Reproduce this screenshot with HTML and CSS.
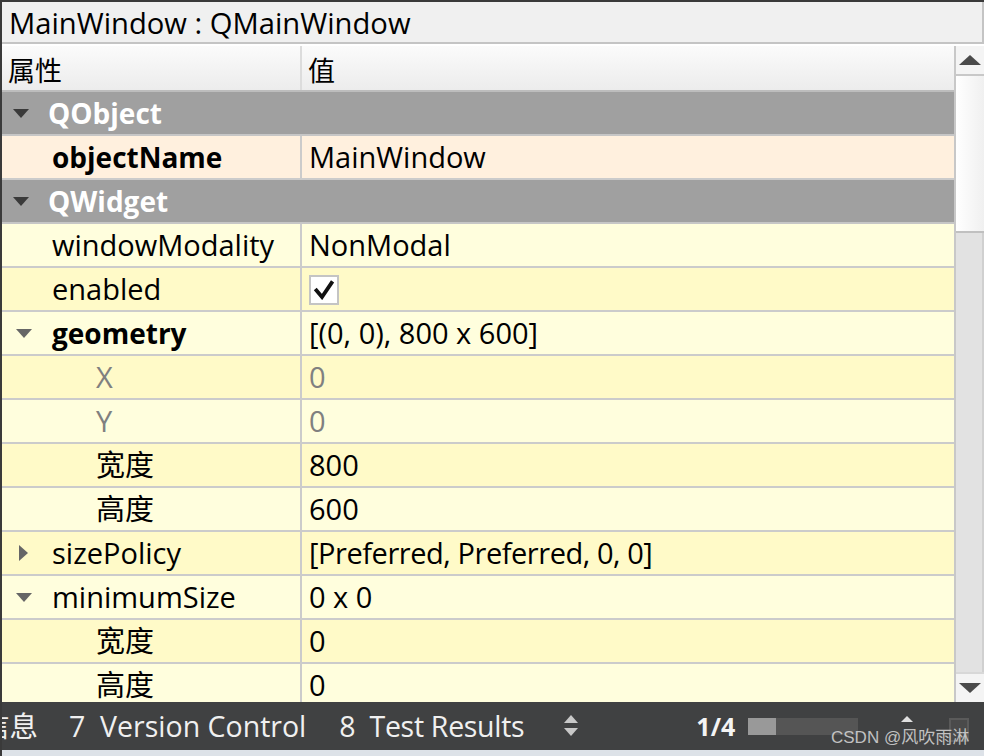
FILE: index.html
```html
<!DOCTYPE html>
<html>
<head>
<meta charset="utf-8">
<link rel="stylesheet" href="styles.css">
</head>
<body>
<div class="app">
  <div class="title">MainWindow : QMainWindow</div>
  <div class="body">
    <div class="table">
      <div class="row header">
        <div class="c1"><span class="hlabel">属性</span></div>
        <div class="c2">值</div>
      </div>
      <div class="row group">
        <div class="c1 full"><svg class="arrow" width="16" height="9" viewBox="0 0 16 9"><polygon points="0,0 16,0 8,9" fill="#3a3a3a"/></svg><span class="gname">QObject</span></div>
      </div>
      <div class="row peach">
        <div class="c1 d0"><span class="name bold">objectName</span></div>
        <div class="c2">MainWindow</div>
      </div>
      <div class="row group">
        <div class="c1 full"><svg class="arrow" width="16" height="9" viewBox="0 0 16 9"><polygon points="0,0 16,0 8,9" fill="#3a3a3a"/></svg><span class="gname">QWidget</span></div>
      </div>
      <div class="row light">
        <div class="c1 d0"><span class="name">windowModality</span></div>
        <div class="c2">NonModal</div>
      </div>
      <div class="row dark">
        <div class="c1 d0"><span class="name">enabled</span></div>
        <div class="c2"><span class="check"><svg width="22" height="20" viewBox="0 0 22 20"><path d="M3.5 10.5 L9 17 L18.5 3" fill="none" stroke="#111" stroke-width="3.8" stroke-linejoin="miter" stroke-linecap="square"/></svg></span></div>
      </div>
      <div class="row light">
        <div class="c1 tw"><svg class="arrow2" width="16" height="9" viewBox="0 0 16 9"><polygon points="0,0 16,0 8,9" fill="#666"/></svg><span class="name bold">geometry</span></div>
        <div class="c2">[(0, 0), 800 x 600]</div>
      </div>
      <div class="row dark">
        <div class="c1 d1"><span class="name gray">X</span></div>
        <div class="c2 gray">0</div>
      </div>
      <div class="row light">
        <div class="c1 d1"><span class="name gray">Y</span></div>
        <div class="c2 gray">0</div>
      </div>
      <div class="row dark">
        <div class="c1 d1"><span class="name">宽度</span></div>
        <div class="c2">800</div>
      </div>
      <div class="row light">
        <div class="c1 d1"><span class="name">高度</span></div>
        <div class="c2">600</div>
      </div>
      <div class="row dark">
        <div class="c1 tw"><svg class="arrow3" width="9" height="16" viewBox="0 0 9 16"><polygon points="0,0 9,8 0,16" fill="#666"/></svg><span class="name">sizePolicy</span></div>
        <div class="c2 narrow">[Preferred, Preferred, 0, 0]</div>
      </div>
      <div class="row light">
        <div class="c1 tw"><svg class="arrow2" width="16" height="9" viewBox="0 0 16 9"><polygon points="0,0 16,0 8,9" fill="#666"/></svg><span class="name">minimumSize</span></div>
        <div class="c2">0 x 0</div>
      </div>
      <div class="row dark">
        <div class="c1 d1"><span class="name">宽度</span></div>
        <div class="c2">0</div>
      </div>
      <div class="row light">
        <div class="c1 d1"><span class="name">高度</span></div>
        <div class="c2">0</div>
      </div>
    </div>
    <div class="scrollbar">
      <div class="sbtn"><svg width="22" height="10" viewBox="0 0 22 10"><polygon points="0,10 22,10 11,0" fill="#4a4a4a"/></svg></div>
      <div class="handle"></div>
      <div class="track"></div>
      <div class="sbtn down"><svg width="22" height="10" viewBox="0 0 22 10"><polygon points="0,0 22,0 11,10" fill="#4a4a4a"/></svg></div>
    </div>
  </div>
  <div class="status">
    <span class="tab first">信息</span>
    <span class="tab t7">7&nbsp; Version Control</span>
    <span class="tab t8">8&nbsp; Test Results</span>
    <svg class="updown" width="14" height="24" viewBox="0 0 14 24"><polygon points="0,9 14,9 7,1" fill="#c8c8c8"/><polygon points="0,14 14,14 7,22" fill="#c8c8c8"/></svg>
    <span class="page">1/4</span>
    <span class="prog"><span class="progfill"></span></span>
    <span class="tri"></span>
    <span class="box"></span>
    <span class="mark">CSDN @风吹雨淋</span>
  </div>
  <div class="strip"></div>
</div>
</body>
</html>
```
FILE: styles.css
```css
* { box-sizing: border-box; }
html, body { margin: 0; padding: 0; }
body {
  width: 984px;
  height: 756px;
  overflow: hidden;
  background: #ffffff;
  font-family: "Open Sans", "Noto Sans CJK SC", sans-serif;
}
.app {
  width: 984px;
  height: 756px;
  display: flex;
  flex-direction: column;
  border-top: 2px solid #3a3a3a;
  border-left: 2px solid #3a3a3a;
  background: #fff;
}
.title {
  height: 42px;
  flex: none;
  background: #f0f0f0;
  border-bottom: 2px solid #c4c4c4;
  border-right: 2px solid #c4c4c4;
  font-size: 29.2px;
  line-height: 42px;
  padding-left: 7px;
  color: #000;
  white-space: nowrap;
  overflow: hidden;
}
.body {
  flex: none;
  height: 658px;
  padding-top: 2px;
  display: flex;
  overflow: hidden;
}
.table {
  width: 952px;
  flex: none;
  overflow: hidden;
}
.row {
  display: flex;
  height: 44px;
  border-bottom: 2px solid #cbcbcb;
  font-size: 29px;
  line-height: 42px;
  color: #000;
}
.c1 {
  width: 300px;
  flex: none;
  border-right: 2px solid #cbcbcb;
  display: flex;
  align-items: center;
  white-space: nowrap;
}
.c2 {
  flex: 1;
  padding-left: 7px;
  white-space: nowrap;
}
.c2.narrow { letter-spacing: -0.45px; }
.header {
  height: 46px;
  background: linear-gradient(#fbfbfb, #ececec);
  border-bottom: 2px solid #bdbdbd;
  font-size: 27px;
  line-height: 50px;
}
.header .c1 { border-right: 2px solid #dcdcdc; padding-left: 6px; align-items: stretch; }
.header .c2 { padding-left: 6px; }
.group {
  background: #a0a0a0;
  border-bottom: 2px solid #c6c6c6;
}
.group .c1.full {
  width: 100%;
  border-right: none;
  padding-left: 11px;
}
.gname {
  color: #fff;
  font-weight: 700;
  font-size: 28px;
  margin-left: 19px;
}
.peach { background: #fff0de; }
.light { background: #fffedd; }
.dark { background: #fffac8; }
.d0 { padding-left: 50px; }
.d1 { padding-left: 94px; }
.tw { padding-left: 14px; }
.arrow2 { margin-right: 20px; }
.arrow3 { margin-left: 3px; margin-right: 24px; }
.bold { font-weight: 700; font-size: 28px; }
.gray { color: #808080; }
.check {
  display: inline-flex;
  width: 30px;
  height: 30px;
  margin-top: 7px;
  vertical-align: top;
  background: #fff;
  border: 2px solid #c4c4c4;
  align-items: center;
  justify-content: center;
}
.scrollbar {
  width: 30px;
  flex: none;
  display: flex;
  flex-direction: column;
  border-left: 2px solid #c8c8c8;
  height: 656px;
}
.sbtn {
  height: 30px;
  flex: none;
  display: flex;
  align-items: center;
  justify-content: center;
  background: #f4f4f4;
  border-bottom: 2px solid #c8c8c8;
}
.sbtn.down {
  border-bottom: none;
  border-top: 2px solid #d8d8d8;
  height: 30px;
  background: #f4f4f4;
}
.handle {
  height: 157px;
  flex: none;
  background: linear-gradient(90deg, #ffffff, #f0f0f0);
  border-bottom: 2px solid #c0c0c0;
}
.track {
  flex: 1;
  background: #e2e2e2;
  border-right: 2px solid #d0d0d0;
}
.status {
  flex: none;
  height: 48px;
  background: #404142;
  color: #f0f0f0;
  display: flex;
  align-items: center;
  font-size: 28.5px;
  white-space: nowrap;
  position: relative;
  overflow: hidden;
}
.tab { line-height: 48px; }
.first { margin-left: -21px; }
.t7 { margin-left: 31px; }
.t8 { margin-left: 33px; letter-spacing: -0.3px; }
.updown { margin-left: 40px; }
.page {
  margin-left: 118px;
  font-weight: 700;
  font-size: 25px;
  color: #f4f4f4;
}
.prog {
  margin-left: 13px;
  width: 110px;
  height: 17px;
  background: #555;
  display: flex;
}
.progfill { width: 28px; background: #999; }
.mark {
  position: absolute;
  left: 829px;
  top: 21px;
  font-family: "Liberation Sans", "Noto Sans CJK SC", sans-serif;
  font-size: 17px;
  color: #cfcfcf;
  opacity: 0.9;
}
.tri {
  position: absolute;
  left: 899px;
  top: 14px;
  width: 0; height: 0;
  border-left: 6px solid transparent;
  border-right: 6px solid transparent;
  border-bottom: 6px solid #e0e0e0;
}
.box {
  position: absolute;
  left: 947px;
  top: 16px;
  width: 20px;
  height: 24px;
  border: 2px solid #5a5a5a;
  background: #4a4a4a;
}
.strip {
  flex: none;
  height: 6px;
  background: #dde2e8;
}
```
